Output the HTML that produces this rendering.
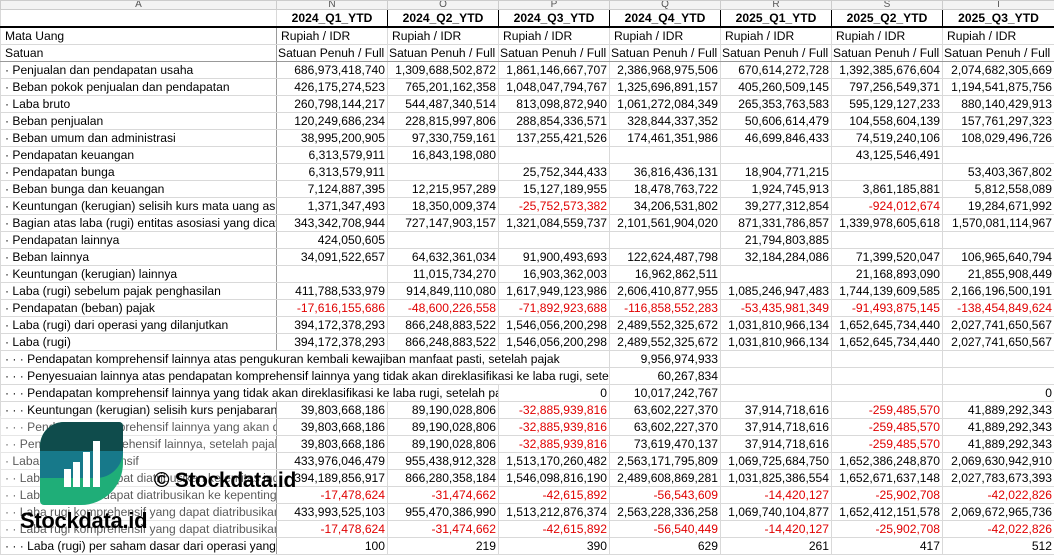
<!DOCTYPE html>
<html><head><meta charset="utf-8"><style>
body{margin:0;width:1054px;height:553px;overflow:hidden;background:#fff;font-family:"Liberation Sans",Arial,sans-serif;font-size:12.1px;color:#000;position:relative}
table{border-collapse:collapse;table-layout:fixed;position:absolute;left:0;top:0;width:1054px}
td{height:16px;padding:0 2px;border:1px solid #d9d9d9;white-space:nowrap;overflow:hidden;text-align:right;line-height:16px}
td.l{text-align:left;padding-left:4px}
td.r{color:#e00000}
tr.let td{height:8px;line-height:8px;font-size:10px;color:#555;text-align:center;background:#f3f3f3;border-color:#ccc;vertical-align:bottom}
tr.h td{font-weight:bold;text-align:center;border-top:1px solid #000;border-left:1px solid #000;border-right:1px solid #000;border-bottom:2px solid #000}
tr.h td.a{border:1px solid #d9d9d9;border-bottom:2px solid #000}
tr.s2 td{border-bottom:1px solid #999}
td.a{border-right:1px solid #9a9a9a}
.wm{position:absolute;left:0;top:416px;width:276px;height:120px;background:rgba(255,255,255,.35)}
.logo{position:absolute;left:40px;top:422px;width:83px;height:83px;border-radius:24px 4px 42px 4px;overflow:hidden;background:#1fae78}
.logo .t{position:absolute;left:0;top:0;width:83px;height:29px;background:#0f4c4c}
.logo .m{position:absolute;left:0;top:29px;width:83px;height:27px;background:#17798a;border-radius:0 0 30px 0}
.bar{position:absolute;background:#fff;width:7px}
.w1{position:absolute;left:20px;top:508px;font-weight:bold;font-size:22px;color:#000;letter-spacing:-.3px}
.w2{position:absolute;left:154px;top:469px;font-weight:bold;font-size:21px;color:#000;letter-spacing:-.3px}
</style></head><body>
<table>
<colgroup><col style="width:276px"><col style="width:111px"><col style="width:111px"><col style="width:111px"><col style="width:111px"><col style="width:111px"><col style="width:111px"><col style="width:112px"></colgroup>
<tr class="let"><td class="a" style="text-align:center">A</td><td>N</td><td>O</td><td>P</td><td>Q</td><td>R</td><td>S</td><td>T</td></tr>
<tr class="h"><td class="a"></td><td>2024_Q1_YTD</td><td>2024_Q2_YTD</td><td>2024_Q3_YTD</td><td>2024_Q4_YTD</td><td>2025_Q1_YTD</td><td>2025_Q2_YTD</td><td>2025_Q3_YTD</td></tr>
<tr><td class="l a">Mata Uang</td><td class="l">Rupiah / IDR</td><td class="l">Rupiah / IDR</td><td class="l">Rupiah / IDR</td><td class="l">Rupiah / IDR</td><td class="l">Rupiah / IDR</td><td class="l">Rupiah / IDR</td><td class="l">Rupiah / IDR</td></tr>
<tr class="s2"><td class="l a">Satuan</td><td class="l" style="padding-left:1px">Satuan Penuh / Full</td><td class="l" style="padding-left:1px">Satuan Penuh / Full</td><td class="l" style="padding-left:1px">Satuan Penuh / Full</td><td class="l" style="padding-left:1px">Satuan Penuh / Full</td><td class="l" style="padding-left:1px">Satuan Penuh / Full</td><td class="l" style="padding-left:1px">Satuan Penuh / Full</td><td class="l" style="padding-left:1px">Satuan Penuh / Full</td></tr>
<tr><td class="l a">· Penjualan dan pendapatan usaha</td><td>686,973,418,740</td><td>1,309,688,502,872</td><td>1,861,146,667,707</td><td>2,386,968,975,506</td><td>670,614,272,728</td><td>1,392,385,676,604</td><td>2,074,682,305,669</td></tr>
<tr><td class="l a">· Beban pokok penjualan dan pendapatan</td><td>426,175,274,523</td><td>765,201,162,358</td><td>1,048,047,794,767</td><td>1,325,696,891,157</td><td>405,260,509,145</td><td>797,256,549,371</td><td>1,194,541,875,756</td></tr>
<tr><td class="l a">· Laba bruto</td><td>260,798,144,217</td><td>544,487,340,514</td><td>813,098,872,940</td><td>1,061,272,084,349</td><td>265,353,763,583</td><td>595,129,127,233</td><td>880,140,429,913</td></tr>
<tr><td class="l a">· Beban penjualan</td><td>120,249,686,234</td><td>228,815,997,806</td><td>288,854,336,571</td><td>328,844,337,352</td><td>50,606,614,479</td><td>104,558,604,139</td><td>157,761,297,323</td></tr>
<tr><td class="l a">· Beban umum dan administrasi</td><td>38,995,200,905</td><td>97,330,759,161</td><td>137,255,421,526</td><td>174,461,351,986</td><td>46,699,846,433</td><td>74,519,240,106</td><td>108,029,496,726</td></tr>
<tr><td class="l a">· Pendapatan keuangan</td><td>6,313,579,911</td><td>16,843,198,080</td><td></td><td></td><td></td><td>43,125,546,491</td><td></td></tr>
<tr><td class="l a">· Pendapatan bunga</td><td>6,313,579,911</td><td></td><td>25,752,344,433</td><td>36,816,436,131</td><td>18,904,771,215</td><td></td><td>53,403,367,802</td></tr>
<tr><td class="l a">· Beban bunga dan keuangan</td><td>7,124,887,395</td><td>12,215,957,289</td><td>15,127,189,955</td><td>18,478,763,722</td><td>1,924,745,913</td><td>3,861,185,881</td><td>5,812,558,089</td></tr>
<tr><td class="l a">· Keuntungan (kerugian) selisih kurs mata uang asing</td><td>1,371,347,493</td><td>18,350,009,374</td><td class="r">-25,752,573,382</td><td>34,206,531,802</td><td>39,277,312,854</td><td class="r">-924,012,674</td><td>19,284,671,992</td></tr>
<tr><td class="l a">· Bagian atas laba (rugi) entitas asosiasi yang dicatat</td><td>343,342,708,944</td><td>727,147,903,157</td><td>1,321,084,559,737</td><td>2,101,561,904,020</td><td>871,331,786,857</td><td>1,339,978,605,618</td><td>1,570,081,114,967</td></tr>
<tr><td class="l a">· Pendapatan lainnya</td><td>424,050,605</td><td></td><td></td><td></td><td>21,794,803,885</td><td></td><td></td></tr>
<tr><td class="l a">· Beban lainnya</td><td>34,091,522,657</td><td>64,632,361,034</td><td>91,900,493,693</td><td>122,624,487,798</td><td>32,184,284,086</td><td>71,399,520,047</td><td>106,965,640,794</td></tr>
<tr><td class="l a">· Keuntungan (kerugian) lainnya</td><td></td><td>11,015,734,270</td><td>16,903,362,003</td><td>16,962,862,511</td><td></td><td>21,168,893,090</td><td>21,855,908,449</td></tr>
<tr><td class="l a">· Laba (rugi) sebelum pajak penghasilan</td><td>411,788,533,979</td><td>914,849,110,080</td><td>1,617,949,123,986</td><td>2,606,410,877,955</td><td>1,085,246,947,483</td><td>1,744,139,609,585</td><td>2,166,196,500,191</td></tr>
<tr><td class="l a">· Pendapatan (beban) pajak</td><td class="r">-17,616,155,686</td><td class="r">-48,600,226,558</td><td class="r">-71,892,923,688</td><td class="r">-116,858,552,283</td><td class="r">-53,435,981,349</td><td class="r">-91,493,875,145</td><td class="r">-138,454,849,624</td></tr>
<tr><td class="l a">· Laba (rugi) dari operasi yang dilanjutkan</td><td>394,172,378,293</td><td>866,248,883,522</td><td>1,546,056,200,298</td><td>2,489,552,325,672</td><td>1,031,810,966,134</td><td>1,652,645,734,440</td><td>2,027,741,650,567</td></tr>
<tr><td class="l a">· Laba (rugi)</td><td>394,172,378,293</td><td>866,248,883,522</td><td>1,546,056,200,298</td><td>2,489,552,325,672</td><td>1,031,810,966,134</td><td>1,652,645,734,440</td><td>2,027,741,650,567</td></tr>
<tr><td class="l" colspan="4">· · · Pendapatan komprehensif lainnya atas pengukuran kembali kewajiban manfaat pasti, setelah pajak</td><td>9,956,974,933</td><td></td><td></td><td></td></tr>
<tr><td class="l" colspan="4">· · · Penyesuaian lainnya atas pendapatan komprehensif lainnya yang tidak akan direklasifikasi ke laba rugi, setelah pajak</td><td>60,267,834</td><td></td><td></td><td></td></tr>
<tr><td class="l" colspan="3">· · · Pendapatan komprehensif lainnya yang tidak akan direklasifikasi ke laba rugi, setelah pajak</td><td>0</td><td>10,017,242,767</td><td></td><td></td><td>0</td></tr>
<tr><td class="l a">· · · Keuntungan (kerugian) selisih kurs penjabaran</td><td>39,803,668,186</td><td>89,190,028,806</td><td class="r">-32,885,939,816</td><td>63,602,227,370</td><td>37,914,718,616</td><td class="r">-259,485,570</td><td>41,889,292,343</td></tr>
<tr><td class="l a">· · · Pendapatan komprehensif lainnya yang akan direklasifikasi</td><td>39,803,668,186</td><td>89,190,028,806</td><td class="r">-32,885,939,816</td><td>63,602,227,370</td><td>37,914,718,616</td><td class="r">-259,485,570</td><td>41,889,292,343</td></tr>
<tr><td class="l a">· · Pendapatan komprehensif lainnya, setelah pajak</td><td>39,803,668,186</td><td>89,190,028,806</td><td class="r">-32,885,939,816</td><td>73,619,470,137</td><td>37,914,718,616</td><td class="r">-259,485,570</td><td>41,889,292,343</td></tr>
<tr><td class="l a">· Laba rugi komprehensif</td><td>433,976,046,479</td><td>955,438,912,328</td><td>1,513,170,260,482</td><td>2,563,171,795,809</td><td>1,069,725,684,750</td><td>1,652,386,248,870</td><td>2,069,630,942,910</td></tr>
<tr><td class="l a">· · Laba rugi yang dapat diatribusikan ke entitas induk</td><td>394,189,856,917</td><td>866,280,358,184</td><td>1,546,098,816,190</td><td>2,489,608,869,281</td><td>1,031,825,386,554</td><td>1,652,671,637,148</td><td>2,027,783,673,393</td></tr>
<tr><td class="l a">· · Laba rugi yang dapat diatribusikan ke kepentingan nonpengendali</td><td class="r">-17,478,624</td><td class="r">-31,474,662</td><td class="r">-42,615,892</td><td class="r">-56,543,609</td><td class="r">-14,420,127</td><td class="r">-25,902,708</td><td class="r">-42,022,826</td></tr>
<tr><td class="l a">· · Laba rugi komprehensif yang dapat diatribusikan ke entitas induk</td><td>433,993,525,103</td><td>955,470,386,990</td><td>1,513,212,876,374</td><td>2,563,228,336,258</td><td>1,069,740,104,877</td><td>1,652,412,151,578</td><td>2,069,672,965,736</td></tr>
<tr><td class="l a">· · Laba rugi komprehensif yang dapat diatribusikan ke kepentingan</td><td class="r">-17,478,624</td><td class="r">-31,474,662</td><td class="r">-42,615,892</td><td class="r">-56,540,449</td><td class="r">-14,420,127</td><td class="r">-25,902,708</td><td class="r">-42,022,826</td></tr>
<tr><td class="l a">· · · Laba (rugi) per saham dasar dari operasi yang dilanjutkan</td><td>100</td><td>219</td><td>390</td><td>629</td><td>261</td><td>417</td><td>512</td></tr>
</table>
<div class="wm"></div>
<div class="logo"><div class="t"></div><div class="m"></div>
<div class="bar" style="left:24px;top:47px;height:18px"></div>
<div class="bar" style="left:33px;top:40px;height:25px"></div>
<div class="bar" style="left:43px;top:30px;height:35px"></div>
<div class="bar" style="left:53px;top:19px;height:46px"></div>
</div>
<div class="w2">© Stockdata.id</div>
<div class="w1">Stockdata.id</div>
</body></html>
